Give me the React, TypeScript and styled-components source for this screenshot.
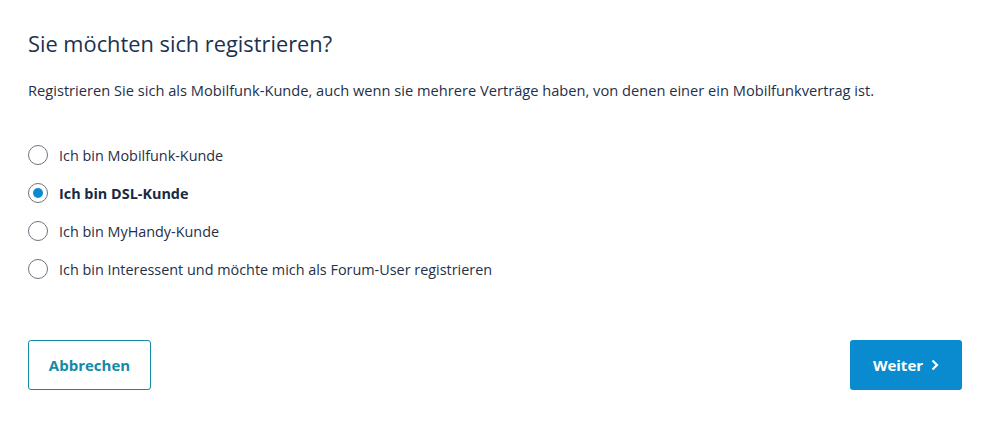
import styled, { createGlobalStyle } from 'styled-components';

const GlobalStyle = createGlobalStyle`
  body {
    margin: 0;
    background: #fff;
    font-family: 'Open Sans', 'Liberation Sans', sans-serif;
    color: #1f3048;
  }
`;

const options = [
  'Ich bin Mobilfunk-Kunde',
  'Ich bin DSL-Kunde',
  'Ich bin MyHandy-Kunde',
  'Ich bin Interessent und möchte mich als Forum-User registrieren',
];

export default function App() {
  const selected = 1;

  return (
    <>
      <GlobalStyle />
      <Page>
        <Title>Sie möchten sich registrieren?</Title>
        <Intro>
          Registrieren Sie sich als Mobilfunk-Kunde, auch wenn sie mehrere Verträge haben, von denen einer ein
          Mobilfunkvertrag ist.
        </Intro>
        <OptionList>
          {options.map((label, i) => (
            <Option key={label}>
              <Radio $checked={i === selected} />
              <OptionLabel $checked={i === selected}>{label}</OptionLabel>
            </Option>
          ))}
        </OptionList>
        <Actions>
          <CancelButton>Abbrechen</CancelButton>
          <NextButton>
            Weiter
            <svg width='9' height='12' viewBox='0 0 9 12' fill='none'>
              <path d='M2.5 1.5 L7 6 L2.5 10.5' stroke='#fff' strokeWidth='2.2' />
            </svg>
          </NextButton>
        </Actions>
      </Page>
    </>
  );
}

const Page = styled.div`
  width: 1000px;
  height: 424px;
  box-sizing: border-box;
  padding: 28px 38px 0 28px;
  display: flex;
  flex-direction: column;
`;

const Title = styled.h1`
  margin: 0;
  font-size: 21.8px;
  line-height: 32px;
  font-weight: 400;
  color: #1c3150;
`;

const Intro = styled.p`
  margin: 20px 0 0;
  font-size: 14.65px;
  line-height: 20px;
  color: #1f3048;
`;

const OptionList = styled.div`
  margin-top: 44px;
  display: flex;
  flex-direction: column;
  row-gap: 16px;
`;

const Option = styled.label`
  display: flex;
  align-items: center;
  column-gap: 11px;
  height: 22px;
`;

const Radio = styled.span<{ $checked: boolean }>`
  width: 20px;
  height: 20px;
  box-sizing: border-box;
  border-radius: 50%;
  border: 1px solid #6b7580;
  display: flex;
  align-items: center;
  justify-content: center;

  &::after {
    content: '';
    display: ${({ $checked }) => ($checked ? 'block' : 'none')};
    width: 10px;
    height: 10px;
    border-radius: 50%;
    background: #0a8bd0;
  }
`;

const OptionLabel = styled.span<{ $checked: boolean }>`
  font-size: 14.4px;
  font-weight: ${({ $checked }) => ($checked ? 700 : 400)};
  color: ${({ $checked }) => ($checked ? '#172a45' : '#1f3048')};
`;

const Actions = styled.div`
  margin-top: 60px;
  display: flex;
  justify-content: space-between;
`;

const CancelButton = styled.button`
  width: 123px;
  height: 50px;
  border: 1px solid #1589a6;
  border-radius: 3px;
  background: #fff;
  color: #1589a6;
  font-family: inherit;
  font-size: 15px;
  font-weight: 700;
`;

const NextButton = styled.button`
  width: 112px;
  height: 50px;
  border: none;
  border-radius: 3px;
  background: #0a8bd0;
  color: #fff;
  font-family: inherit;
  font-size: 15px;
  font-weight: 700;
  display: flex;
  align-items: center;
  justify-content: center;
  column-gap: 7px;
`;
